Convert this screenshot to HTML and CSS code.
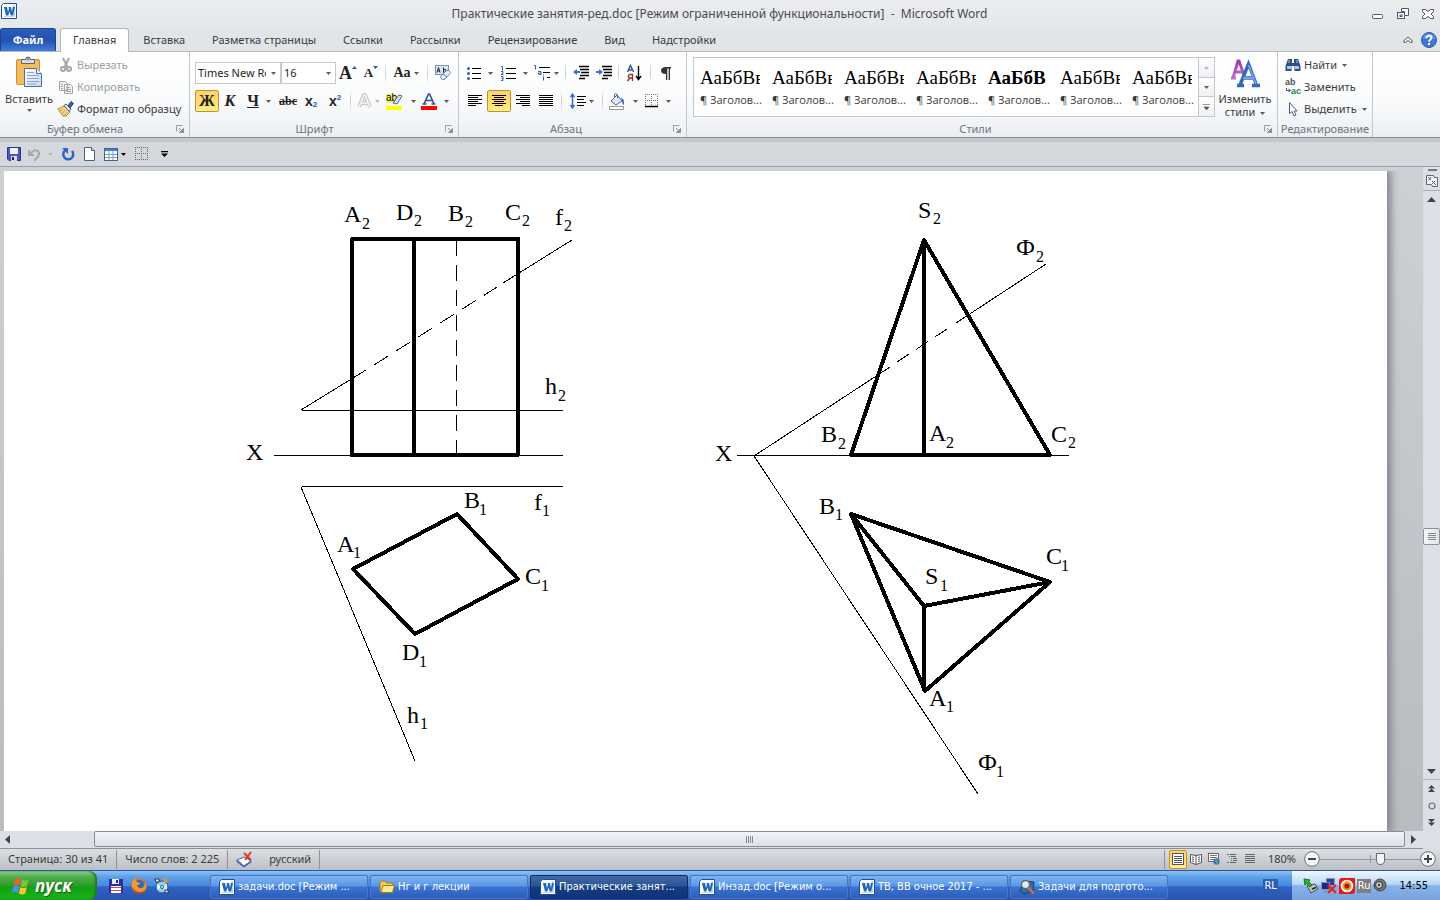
FILE: index.html
```html
<!DOCTYPE html>
<html lang="ru">
<head>
<meta charset="utf-8">
<title>Практические занятия-ред.doc - Microsoft Word</title>
<link rel="stylesheet" href="styles.css">
</head>
<body>
<svg class="defs" aria-hidden="true">
  <defs>
    <linearGradient id="gw" x1="0" y1="0" x2="1" y2="1"><stop offset="0" stop-color="#fff"/><stop offset="1" stop-color="#c3d8f2"/></linearGradient>
    <linearGradient id="gp" x1="0" y1="0" x2="0" y2="1"><stop offset="0" stop-color="#9a3fb0"/><stop offset="1" stop-color="#c26ad2"/></linearGradient>
    <symbol id="word" viewBox="0 0 16 16"><path d="M2.500.5h13v15H.5v-13z" fill="#fff" stroke="#1f4e96"/><path d="M12 2h2v12H3v-1h9z" fill="#c3d8f2"/><path d="M3 4h3l1 5 1-3.500L7.500 4H10l1 5 .8-5H14l-2 8.500H9.800L8.500 8.500l-1.200 4H5z" fill="#1c66bd"/></symbol>
    <symbol id="dn" viewBox="0 0 5 3"><path d="M0 0h5L2.500 3z" fill="currentColor"/></symbol>
    <symbol id="launch" viewBox="0 0 8 8"><path d="M.5 6.500v-6h6" fill="none" stroke="#9a9fa8"/><path d="M3 3l3 3M7.500 3.500v4h-4z" fill="#8b9099" stroke="#8b9099"/></symbol>
    <symbol id="lines" viewBox="0 0 14 12"><path d="M0 .5h14M0 2.500h10M0 4.500h14M0 6.500h10M0 8.500h14M0 10.500h8" stroke="#000"/></symbol>
  </defs>
</svg>

<header class="titlebar">
  <svg class="i16"><use href="#word"/></svg>
  <h1>Практические занятия-ред.doc [Режим ограниченной функциональности]&nbsp; -&nbsp; Microsoft Word</h1>
  <div class="wincontrols">
    <button aria-label="Свернуть"><svg width="12" height="12"><rect x=".5" y="6.500" width="10" height="4" rx="1" fill="#fff" stroke="#53536a"/></svg></button>
    <button aria-label="Восстановить"><svg width="12" height="12" fill="#fff" stroke="#53536a"><path d="M4.500.5h7v7h-4v-4h-3z"/><rect x=".5" y="4.500" width="7" height="6"/><rect x="3" y="7" width="2" height="1.500"/></svg></button>
    <button aria-label="Закрыть"><svg width="12" height="12"><path d="M.5 1.500h3L6 3.500l2.500-2h3v2L9 6l2.500 2.500v2h-3L6 8.500l-2.500 2h-3v-2L3 6 .5 3.500z" fill="#fff" stroke="#53536a"/></svg></button>
  </div>
</header>

<nav class="tabs">
  <button class="file">Файл</button>
  <button class="tab on">Главная</button>
  <button class="tab">Вставка</button>
  <button class="tab">Разметка страницы</button>
  <button class="tab">Ссылки</button>
  <button class="tab">Рассылки</button>
  <button class="tab">Рецензирование</button>
  <button class="tab">Вид</button>
  <button class="tab">Надстройки</button>
  <div class="tabs-end">
    <button aria-label="Свернуть ленту"><svg width="10" height="8"><path d="M1 6.500V4.500L5 1l4 3.500v2H7.500L5 4.500 2.500 6.500z" fill="#fff" stroke="#555"/></svg></button>
    <button aria-label="Справка"><svg width="16" height="16"><circle cx="8" cy="8" r="7.500" fill="#3f78cf" stroke="#2c5aa8"/><path d="M2 7a6 5.500 0 0 1 12 0q-6-2-12 0" fill="#7fb0ee" opacity=".6"/><path d="M5.500 6.200c0-3.400 5-3.400 5-.5 0 1.900-2.500 1.900-2.500 4" fill="none" stroke="#fff" stroke-width="1.800"/><path d="M7 11h2v2H7z" fill="#fff"/></svg></button>
  </div>
</nav>

<section class="ribbon">
  <div class="group clip">
    <div class="body">
      <button class="big paste">
        <svg width="28" height="32"><rect x="1.500" y="3.500" width="23" height="25" rx="1.500" fill="#f2bd5c" stroke="#c98f35"/><path d="M6.500 7.500v-4h4a2.500 2.500 0 0 1 5 0h4v4z" fill="#d9dde3" stroke="#5d6672"/><circle cx="13" cy="3" r="1" fill="#fff" stroke="#5d6672"/><path d="M9.500 12.500h12l5 5v13h-17z" fill="url(#gw)" stroke="#4f6f9b"/><path d="M21.500 12.500v5h5" fill="#fff" stroke="#4f6f9b"/><path d="M12 16.500h7M12 19.500h12M12 22.500h12M12 25.500h12M12 28h9" stroke="#8ba6cc"/></svg>
        <span>Вставить</span><svg class="arr"><use href="#dn"/></svg>
      </button>
      <div class="stack">
        <button class="off"><svg class="i16" fill="none" stroke="#a3a5a8" stroke-width="2"><path d="M5 1l4.500 9M11 1L6.500 10"/><circle cx="5" cy="12" r="2"/><circle cx="11" cy="12" r="2"/></svg>Вырезать</button>
        <button class="off"><svg class="i16" fill="#f1f1f1" stroke="#a3a5a8"><path d="M1.500 2.500h6l2 2v7h-8zM6.500 5.500h6l2 2v7h-8z"/><path d="M8 8.500h4M8 10.500h5M8 12.500h5M3 5.500h2M3 7.500h2M3 9.500h2"/></svg>Копировать</button>
        <button><svg class="i16"><path d="M0 8l6-3 6 6-4 4H5z" fill="#f6dc84" stroke="#b18a3a"/><path d="M4 13l3-4M6 15l3-4M2 10l3-2" stroke="#c59c45"/><path d="M6 4.500L8 3l5 5-2 2.500z" fill="#e7e9ee" stroke="#5b6472"/><path d="M10 5l3-4.500 2.500 2L12 7z" fill="#3f62b4" stroke="#223f85"/></svg>Формат по образцу</button>
      </div>
    </div>
    <footer><span>Буфер обмена</span><svg class="i8"><use href="#launch"/></svg></footer>
  </div>

  <div class="group font">
    <div class="rows">
      <div class="row">
        <div class="combo c-name"><input aria-label="Шрифт" value="Times New Roman"><button aria-label="Список шрифтов"><svg class="arr"><use href="#dn"/></svg></button></div>
        <div class="combo c-size"><input aria-label="Размер шрифта" value="16"><button aria-label="Список размеров"><svg class="arr"><use href="#dn"/></svg></button></div>
        <button class="w24 serif s18" aria-label="Увеличить размер">A<svg class="sup" width="5" height="3"><path d="M0 3h5L2.500 0z" fill="#2d57a7"/></svg></button>
        <button class="w22 serif s13" aria-label="Уменьшить размер">A<svg class="sup" width="5" height="3"><path d="M0 0h5L2.500 3z" fill="#2d57a7"/></svg></button>
        <i class="sep"></i>
        <button class="w36 serif s14">Aa<svg class="arr"><use href="#dn"/></svg></button>
        <i class="sep"></i>
        <button class="w26" aria-label="Очистить формат"><svg width="17" height="16"><rect x=".5" y=".5" width="13" height="9" fill="#dbe8f7" stroke="#7f93b3"/><path d="M2 7.500l1.500-5L5 7.500M2.500 6h2M8.500 2.500v5M8.500 4.500q3-.5 2.500 1.500-.5 2-2.500 1" fill="none" stroke="#222"/><path d="M6 11l5-5q1-1 2.500-.5l1.500 1q1 1 0 2l-5 5.500q-1 1-2.500.5L6 13.500q-1-1 0-2.500z" fill="#e9effa" stroke="#5f7fb6"/><path d="M8 9l4 3" stroke="#5f7fb6"/></svg></button>
      </div>
      <div class="row">
        <button class="hot w24 serif s16">Ж</button>
        <button class="w22 serif s16 it">К</button>
        <button class="w36 serif s16"><u>Ч</u><svg class="arr gapped"><use href="#dn"/></svg></button>
        <button class="w22 serif s12"><s>abc</s></button>
        <button class="w24 sans s14">x<small class="lo">2</small></button>
        <button class="w24 sans s14">x<small class="hi">2</small></button>
        <i class="sep"></i>
        <button class="w30" aria-label="Текстовые эффекты"><svg width="15" height="16"><path d="M2 14L7 2h1l5 12M4.500 10h6" fill="none" stroke="#c9c9cc" stroke-width="4"/><path d="M2 14L7 2h1l5 12M4.500 10h6" fill="none" stroke="#f6f6f6" stroke-width="1.500"/></svg><svg class="arr pale"><use href="#dn"/></svg></button>
        <button class="w36" aria-label="Цвет выделения"><svg width="18" height="17"><path d="M0 1h9v9H0z" fill="#f7f36a"/><text x="0" y="8" class="tiny">ab</text><path d="M7 10l6-8 3 1-5 8z" fill="#dbe6f5" stroke="#4767a0"/><path d="M0 13h16v4H0z" fill="#ff0"/></svg><svg class="arr gapped"><use href="#dn"/></svg></button>
        <button class="w32" aria-label="Цвет текста"><svg width="16" height="17"><path d="M3 11L7.500 1h1L13 11M5 7.500h6M1.500 11h4M10.500 11h4" fill="none" stroke="#30549b" stroke-width="1.700"/><path d="M0 13h16v4H0z" fill="#f00"/></svg><svg class="arr gapped"><use href="#dn"/></svg></button>
      </div>
    </div>
    <footer><span>Шрифт</span><svg class="i8"><use href="#launch"/></svg></footer>
  </div>

  <div class="group para">
    <div class="rows">
      <div class="row">
        <button class="w34" aria-label="Маркеры"><svg width="14" height="14"><path d="M5 2.500h9M5 7.500h9M5 12.500h9" stroke="#000"/><circle cx="1.500" cy="2.500" r="1.500" fill="#3a5fa8"/><circle cx="1.500" cy="7.500" r="1.500" fill="#3a5fa8"/><circle cx="1.500" cy="12.500" r="1.500" fill="#3a5fa8"/></svg><svg class="arr gapped"><use href="#dn"/></svg></button>
        <button class="w34" aria-label="Нумерация"><svg width="15" height="15"><path d="M5 2.500h10M5 7.500h10M5 12.500h10" stroke="#000"/><path d="M0 .5h1.500v4M0 5.500h2v1.500l-2 1.500h2.500M0 10.500h2v4H0M.5 12.500H2" fill="none" stroke="#3a5fa8"/></svg><svg class="arr gapped"><use href="#dn"/></svg></button>
        <button class="w30" aria-label="Многоуровневый список"><svg width="17" height="16"><path d="M5 2.500h11M9 7.500h7M13 12.500h3" stroke="#000"/><path d="M0 .5h1.500v4M4 6.500h3v3H4.500V8H7M9.500 11.500v4M9.500 9.500v1" fill="none" stroke="#3a5fa8"/></svg><svg class="arr"><use href="#dn"/></svg></button>
        <i class="sep wide"></i>
        <button class="w24" aria-label="Уменьшить отступ"><svg width="16" height="14"><path d="M6 .5h10M7 3.500h9M8 6.500h8M7 9.500h9M6 12.500h6" stroke="#000" stroke-width="1.500"/><path d="M0 6l4-3v2h3v2H4v2z" fill="#3b70c9"/></svg></button>
        <button class="w22" aria-label="Увеличить отступ"><svg width="16" height="14"><path d="M6 .5h10M7 3.500h9M8 6.500h8M7 9.500h9M6 12.500h6" stroke="#000" stroke-width="1.500"/><path d="M7 6L3 3v2H0v2h3v2z" fill="#3b70c9"/></svg></button>
        <i class="sep"></i>
        <button class="w26" aria-label="Сортировка"><svg width="15" height="16"><path d="M.5 7L3.500.5l3 6.500M1.500 5h4" fill="none" stroke="#30549b" stroke-width="1.400"/><path d="M5.500 16V9.500h-3q-2.500 2 0 3.500h3M3 13l-2.500 3" fill="none" stroke="#97302c" stroke-width="1.400"/><path d="M11.500 1v12M9 11l2.500 3.500L14 11" fill="none" stroke="#000" stroke-width="1.400"/></svg></button>
        <i class="sep"></i>
        <button class="w26" aria-label="Непечатаемые знаки"><svg width="10" height="13"><path d="M5 0h5v1.500H9V13H7.700V1.500H6.300V13H5V7Q0 7 0 3.500T5 0z" fill="#333"/></svg></button>
      </div>
      <div class="row">
        <button class="w24" aria-label="По левому краю"><svg width="14" height="12"><use href="#lines"/></svg></button>
        <button class="hot w24" aria-label="По центру"><svg width="14" height="12"><path d="M0 .5h14M2 2.500h10M0 4.500h14M2 6.500h10M0 8.500h14M3 10.500h8" stroke="#000"/></svg></button>
        <button class="w24" aria-label="По правому краю"><svg width="14" height="12"><path d="M0 .5h14M4 2.500h10M0 4.500h14M4 6.500h10M0 8.500h14M6 10.500h8" stroke="#000"/></svg></button>
        <button class="w22" aria-label="По ширине"><svg width="14" height="12"><path d="M0 .5h14M0 2.500h14M0 4.500h14M0 6.500h14M0 8.500h14M0 10.500h14" stroke="#000"/></svg></button>
        <i class="sep wide"></i>
        <button class="w34" aria-label="Интервал"><svg width="16" height="16"><path d="M7 3.500h9M7 6.500h7M7 9.500h9M7 12.500h7" stroke="#000"/><path d="M2.500 1v14M.5 4l2-3 2 3M.5 12l2 3 2-3" fill="none" stroke="#3b70c9" stroke-width="1.500"/></svg><svg class="arr"><use href="#dn"/></svg></button>
        <i class="sep"></i>
        <button class="w36" aria-label="Заливка"><svg width="17" height="17"><path d="M2 8l6-6 5 6-6 4z" fill="#dfe9f7" stroke="#4767a0"/><path d="M5.500 5V1.500q1.500-2 3 0V5" fill="none" stroke="#4767a0"/><path d="M12 5q4 1 3 7-2-1-2-4z" fill="#3b70c9"/><rect x=".5" y="13.500" width="14" height="3" fill="#fff" stroke="#999"/></svg><svg class="arr gapped"><use href="#dn"/></svg></button>
        <button class="w34" aria-label="Границы"><svg width="14" height="14"><path d="M0 .5h13M0 6.500h13M.5 0v12M6.500 0v12M12.500 0v12" stroke="#777" stroke-dasharray="1 1"/><path d="M0 12.500h13" stroke="#000" stroke-width="1.500"/></svg><svg class="arr gapped"><use href="#dn"/></svg></button>
      </div>
    </div>
    <footer><span>Абзац</span><svg class="i8"><use href="#launch"/></svg></footer>
  </div>

  <div class="group styles">
    <div class="body">
      <div class="gallery">
        <button class="style"><b>АаБбВв</b><span>¶ Заголов...</span></button>
        <button class="style"><b>АаБбВв</b><span>¶ Заголов...</span></button>
        <button class="style"><b>АаБбВв</b><span>¶ Заголов...</span></button>
        <button class="style"><b>АаБбВв</b><span>¶ Заголов...</span></button>
        <button class="style strong"><b>АаБбВ</b><span>¶ Заголов...</span></button>
        <button class="style"><b>АаБбВв</b><span>¶ Заголов...</span></button>
        <button class="style"><b>АаБбВв</b><span>¶ Заголов...</span></button>
        <div class="spin">
          <button aria-label="Вверх"><svg width="5" height="3"><path d="M0 3h5L2.500 0z" fill="#b5b8bd"/></svg></button>
          <button aria-label="Вниз"><svg class="arr"><use href="#dn"/></svg></button>
          <button aria-label="Все стили"><svg width="7" height="6"><path d="M0 .5h7M1 3h5L3.500 6z" fill="#555" stroke="#555" stroke-width=".6"/></svg></button>
        </div>
      </div>
      <button class="big change">
        <svg width="30" height="30"><path d="M1 20h5M3 20L8 3h1l5 14M5 14h8" fill="none" stroke="url(#gp)" stroke-width="3"/><path d="M10 27L18.500 6l8 21M13 20h11M7 27.500h7M22 27.500h8" fill="none" stroke="#3567b8" stroke-width="3.400"/><path d="M18.500 7l7.500 19M13 20h10" stroke="#6fa4ee" stroke-width="1.800" fill="none"/></svg>
        <span>Изменить</span><span>стили <svg class="arr"><use href="#dn"/></svg></span>
      </button>
    </div>
    <footer><span>Стили</span><svg class="i8"><use href="#launch"/></svg></footer>
  </div>

  <div class="group edit">
    <div class="stack">
      <button><svg class="i16"><path d="M3 2h4v4h2V2h4l2.500 7v5h-6V9h-3v5h-6V9z" fill="#2c4f86"/><path d="M2 9h4v3H2zM10 9h4v3h-4z" fill="#a9c6ec"/><path d="M4 3v3M12 3v3" stroke="#a9c6ec"/></svg>Найти <svg class="arr"><use href="#dn"/></svg></button>
      <button><svg class="i16"><text x="0" y="6" class="rep">ab</text><text x="6" y="15" class="rep green">ac</text><path d="M1.500 9v2.500H5M3.500 10l2 1.500-2 1.500" fill="none" stroke="#30549b"/></svg>Заменить</button>
      <button><svg class="i16"><path d="M4.500 1.500v11l2.500-2 2 4.500 2-1-2-4h3z" fill="#fff" stroke="#4a618c"/></svg>Выделить <svg class="arr"><use href="#dn"/></svg></button>
    </div>
    <footer><span>Редактирование</span></footer>
  </div>
</section>

<div class="qat">
  <button class="q27" aria-label="Сохранить"><svg width="14" height="14"><path d="M.5.5h13v13H2l-1.500-1.500z" fill="#4a55c8" stroke="#2f3590"/><path d="M3 1h8v6H3z" fill="#eef1ff"/><path d="M4 9h6v5H4z" fill="#d9d9e4"/><path d="M5 10h2v3H5z" fill="#223"/></svg></button>
  <button class="q27 pale" aria-label="Отменить"><svg width="13" height="13"><path d="M1 2v5h5M1.500 6.500Q8-1 11 4.500q.5 4-5 8" fill="none" stroke="#a5a8ad" stroke-width="2"/></svg><svg class="arr gapped"><use href="#dn"/></svg></button>
  <button class="q27" aria-label="Повторить"><svg width="14" height="14"><path d="M4 3.500A5 5 0 1 0 11 4" fill="none" stroke="#3166c0" stroke-width="2.500"/><path d="M1 1h6v6z" fill="#3166c0"/></svg></button>
  <button class="q18" aria-label="Создать"><svg width="12" height="14"><path d="M.5.500h7l3 3v10H.5z" fill="#fff" stroke="#4f6080"/><path d="M7.500.5v3h3" fill="#c9d5e8" stroke="#4f6080"/></svg></button>
  <button class="q32" aria-label="Таблица"><svg width="14" height="13"><rect x=".5" y=".5" width="13" height="12" fill="#fff" stroke="#3e5f9c"/><path d="M1 1h12v2H1z" fill="#4f7fd0"/><path d="M1 6.500h12M1 9.500h12M5 3v9M9 3v9" stroke="#7f9cc8"/></svg><svg class="arr black"><use href="#dn"/></svg></button>
  <button class="w22" aria-label="Сетка"><svg width="14" height="14"><path d="M0 .5h13M0 6.500h13M0 12.500h13M.5 0v13M6.500 0v13M12.500 0v13" stroke="#666" stroke-dasharray="1 1"/></svg></button>
  <button class="w22" aria-label="Настройка панели"><svg width="7" height="6"><path d="M0 0h7v1.300H0zM0 2.500h7L3.500 6z" fill="#000"/></svg></button>
</div>

<main class="work">
  <div class="desk">
    <article class="page">
      <svg class="drawing" width="1383" height="660" viewBox="4 171 1383 660">
        <g class="thin">
          <path d="M302 410.500h261M274 455.500h289M302 486.500h261M301 487L415 761"/>
          <path d="M301 410L366 370M503 283L572 240"/>
          <path d="M374 365L497 287" stroke-dasharray="17 9"/>
          <path d="M456.500 240V455" stroke-dasharray="16 9"/>
          <path d="M737 455.500h332M978 794L754 456L890 367M956 323L1046 264"/>
          <path d="M897 362L950 327" stroke-dasharray="14 9"/>
        </g>
        <g class="thick">
          <path d="M352 239H518V455H352ZM414 239V455M353 569L457 514L518 579L415 634Z"/>
          <path d="M924 240L851 455H1050ZM924 240V455"/>
          <path d="M851 514L1050 582L925 691ZM851 514L924 606L1050 582M924 606V691"/>
        </g>
        <g class="label">
          <text x="344" y="222">A<tspan class="n" x="362" y="229">2</tspan></text>
          <text x="396" y="220">D<tspan class="n" x="414" y="226">2</tspan></text>
          <text x="448" y="221">B<tspan class="n" x="465" y="227">2</tspan></text>
          <text x="505" y="220">C<tspan class="n" x="522" y="226">2</tspan></text>
          <text x="555" y="225">f<tspan class="n" x="564" y="231">2</tspan></text>
          <text x="545" y="394">h<tspan class="n" x="558" y="401">2</tspan></text>
          <text x="246" y="460">X</text>
          <text x="464" y="508">B<tspan class="n" x="479" y="515">1</tspan></text>
          <text x="534" y="510">f<tspan class="n" x="542" y="516">1</tspan></text>
          <text x="337" y="552">A<tspan class="n" x="353" y="558">1</tspan></text>
          <text x="525" y="584">C<tspan class="n" x="541" y="591">1</tspan></text>
          <text x="402" y="660">D<tspan class="n" x="419" y="667">1</tspan></text>
          <text x="407" y="723">h<tspan class="n" x="420" y="729">1</tspan></text>
          <text x="918" y="218">S<tspan class="n" x="933" y="224">2</tspan></text>
          <text x="1016" y="255">Ф<tspan class="n" x="1036" y="262">2</tspan></text>
          <text x="821" y="442">B<tspan class="n" x="838" y="449">2</tspan></text>
          <text x="929" y="441">A<tspan class="n" x="946" y="448">2</tspan></text>
          <text x="1051" y="442">C<tspan class="n" x="1068" y="448">2</tspan></text>
          <text x="715" y="461">X</text>
          <text x="819" y="514">B<tspan class="n" x="835" y="520">1</tspan></text>
          <text x="925" y="584">S<tspan class="n" x="940" y="591">1</tspan></text>
          <text x="1046" y="564">C<tspan class="n" x="1061" y="571">1</tspan></text>
          <text x="929" y="706">A<tspan class="n" x="946" y="712">1</tspan></text>
          <text x="978" y="770">Ф<tspan class="n" x="996" y="777">1</tspan></text>
        </g>
      </svg>
    </article>
  </div>
  <div class="vscroll">
    <button class="split" aria-label="Линейка"><svg width="12" height="19"><path d="M2 .5h9M2 1.500h9" stroke="#777"/><path d="M.5 6.500h7l1 2h3v9h-5l-1-2h-5z" fill="#f1f3f6" stroke="#666"/><path d="M2 8l3 3M5 8l-2 3M6 12l4 4M9 12l-3 3" stroke="#666"/></svg></button>
    <button class="up" aria-label="Вверх"><svg width="9" height="5"><path d="M0 5h9L4.500 0z" fill="#444"/></svg></button>
    <div class="vtrack"><button class="vthumb" aria-label="Прокрутка"><svg width="8" height="8"><path d="M0 .5h8M0 2.500h8M0 4.500h8M0 6.500h8" stroke="#888"/></svg></button></div>
    <button class="down" aria-label="Вниз"><svg width="9" height="5"><path d="M0 0h9L4.500 5z" fill="#444"/></svg></button>
    <button class="nav" aria-label="Предыдущая страница"><svg width="7" height="7"><path d="M0 3.500h7L3.500 0zM0 7h7L3.500 3.500z" fill="#444"/></svg></button>
    <button class="nav" aria-label="Объект перехода"><svg width="8" height="8"><circle cx="4" cy="4" r="3" fill="none" stroke="#666" stroke-width="1.200"/></svg></button>
    <button class="nav" aria-label="Следующая страница"><svg width="7" height="7"><path d="M0 0h7L3.500 3.500zM0 3.500h7L3.500 7z" fill="#444"/></svg></button>
  </div>
  <div class="hscroll">
    <button class="hleft" aria-label="Влево"><svg width="5" height="9"><path d="M5 0v9L0 4.500z" fill="#444"/></svg></button>
    <button class="hthumb" aria-label="Горизонтальная прокрутка"><svg width="8" height="7"><path d="M.5 0v7M2.500 0v7M4.500 0v7M6.500 0v7" stroke="#888"/></svg></button>
    <button class="hright" aria-label="Вправо"><svg width="5" height="9"><path d="M0 0v9l5-4.500z" fill="#444"/></svg></button>
  </div>
</main>

<div class="status">
  <span class="cell">Страница: 30 из 41</span>
  <span class="cell">Число слов: 2 225</span>
  <span class="cell lang"><svg width="17" height="15"><path d="M1 8l7-3 7 4-7 5z" fill="#fff" stroke="#4465a5"/><path d="M1 8v2l7 5 7-5V9l-7 5z" fill="#8aa8dc" stroke="#4465a5"/><path d="M8 1l7 7M15 0L9 8" stroke="#e03c20" stroke-width="2"/></svg>русский</span>
  <div class="views">
    <button class="hot" aria-label="Разметка страницы"><svg width="12" height="12"><rect x=".5" y=".5" width="11" height="11" fill="#fff" stroke="#555"/><path d="M2 3.500h8M2 5.500h8M2 7.500h8M2 9.500h8" stroke="#555"/></svg></button>
    <button aria-label="Режим чтения"><svg width="12" height="12"><path d="M.5 1.500l5.500 1 5.500-1v8l-5.500 2-5.500-2zM6 2v9" fill="#fff" stroke="#555"/><path d="M2 4l2 .5M2 6l2 .5M2 8l2 .5M8 4.500l2-.5M8 6.500l2-.5M8 8.500l2-.5" stroke="#555"/></svg></button>
    <button aria-label="Веб-документ"><svg width="12" height="12"><rect x=".5" y=".5" width="10" height="8" fill="#fff" stroke="#666"/><path d="M2 2.500h7M2 4.500h7M2 6.500h4" stroke="#777"/><circle cx="8.500" cy="8.500" r="3.200" fill="#3c78b8"/><path d="M7 7l2 .5 1 2-1.500 1z" fill="#6bb36b"/></svg></button>
    <button aria-label="Структура"><svg width="10" height="10"><path d="M0 .5h2M3 .5h6M2 2.500h1M4 2.500h5M4 4.500h1M6 4.500h4M4 6.500h1M6 6.500h4M0 8.500h2M3 8.500h6" stroke="#666"/></svg></button>
    <button aria-label="Черновик"><svg width="10" height="10"><path d="M0 .5h10M0 2.500h10M0 4.500h10M0 6.500h10M0 8.500h10" stroke="#666"/></svg></button>
  </div>
  <button class="pct">180%</button>
  <button class="round" aria-label="Уменьшить"><svg width="16" height="16"><circle cx="8" cy="8" r="7.300" fill="#f6f7f8" stroke="#6b7078"/><path d="M4 8h8" stroke="#444" stroke-width="2"/></svg></button>
  <input class="zoom" type="range" min="0" max="100" value="61" aria-label="Масштаб">
  <button class="round" aria-label="Увеличить"><svg width="16" height="16"><circle cx="8" cy="8" r="7.300" fill="#f6f7f8" stroke="#6b7078"/><path d="M4 8h8M8 4v8" stroke="#444" stroke-width="2"/></svg></button>
</div>

<footer class="taskbar">
  <button class="start"><svg width="20" height="18"><path d="M4 2q3-2 6 0L8.500 8.500q-3-2-6 0z" fill="#f0602a"/><path d="M11 2.500q3 2 6.500 0L16 9q-3 2-6.500 0z" fill="#7fc241"/><path d="M2.300 9.500q3-2 6 0L7 16q-3-2-6 0z" fill="#4a8df0"/><path d="M9.300 10q3 2 6.500 0l-1.500 6.500q-3 2-6.500 0z" fill="#fbc62a"/></svg>пуск</button>
  <div class="quick">
    <button aria-label="Save"><svg class="i16"><path d="M1 1h14v14H1z" fill="#2b2f9c"/><path d="M4 1h7v5H4z" fill="#e8ecf8"/><path d="M8 2h2v3H8z" fill="#2b2f9c"/><path d="M3 8h10v7H3z" fill="#fff"/><path d="M3 9.500h10M3 12.500h10" stroke="#e04048"/></svg></button>
    <button aria-label="Firefox"><svg class="i16"><circle cx="8" cy="8" r="7.500" fill="#e5701a"/><circle cx="8.500" cy="6.500" r="4.500" fill="#3469b8"/><path d="M1 5q1-4 4-4.500Q4 3 6 4l3 1q0 2-3 2 1 4 5 3 3-1 3.500-5 2 5-1 8.500Q8 17 3 13 0 9 1 5z" fill="#f59a2a"/><path d="M2 9q2 5 7 5 4 0 6-4-1 5-7 5.500Q2 15 2 9z" fill="#c4450f"/></svg></button>
    <button aria-label="Nero"><svg class="i16"><circle cx="8" cy="9" r="6" fill="#8fd0f4" stroke="#1e5bab"/><path d="M8 9l5-3v6zM8 9L3 6v6z" fill="#e6f8ff"/><circle cx="8" cy="9" r="1.500" fill="#fff" stroke="#357"/><path d="M8 1l6-1-2 2 3 1-4 2z" fill="#f3952b"/><path d="M1 1h4v3H2zM11 12h3v3h-3z" fill="#fff" stroke="#234"/></svg></button>
  </div>
  <div class="tasks">
    <button><svg class="i16"><use href="#word"/></svg>задачи.doc [Режим ...</button>
    <button><svg class="i16"><path d="M1 3.500L2.500 2H6l1.500 2H14v9.500H2L1 12z" fill="#f3cf4e" stroke="#a67a12"/><path d="M2 13.500L4 6.500h11.500l-2 7z" fill="#fdeb96" stroke="#a67a12"/></svg>Нг и г лекции</button>
    <button class="on"><svg class="i16"><use href="#word"/></svg>Практические занят...</button>
    <button><svg class="i16"><use href="#word"/></svg>Инзад.doc [Режим о...</button>
    <button><svg class="i16"><use href="#word"/></svg>ТВ, ВВ очное 2017 - ...</button>
    <button><svg class="i16"><path d="M5 2l10 1-1 9-9 3-4-3z" fill="#2f6fb0" stroke="#1c3f66"/><circle cx="6.500" cy="5.500" r="4" fill="#dceffc" stroke="#666" stroke-width="1.300"/><path d="M9.500 8.500l5 6" stroke="#e06a3a" stroke-width="2.500"/></svg>Задачи для подгото...</button>
  </div>
  <span class="rl">RL</span>
  <div class="tray">
    <svg class="i16"><path d="M4 8l8-2 3 5-7 4z" fill="#b9bec6" stroke="#4a5058"/><path d="M9 11l4-1.500" stroke="#222" stroke-width="1.500"/><path d="M1 1l6 1-1.500 1.500L9 7 7 9 3.500 5.500 2 7z" fill="#2fb52c" stroke="#157015"/></svg>
    <svg class="i16"><rect x="5.500" y=".5" width="8" height="7" fill="#2d3f9e" stroke="#8b94b8"/><rect x=".5" y="4.500" width="8" height="7" fill="#1c2a80" stroke="#8b94b8"/><path d="M2 13.500h6" stroke="#8b94b8" stroke-width="2"/><path d="M7 7l8 8M15 7l-8 8" stroke="#e02820" stroke-width="2.400"/></svg>
    <svg class="i16"><path d="M3 0h13v13q0 3-3 3H0V3q0-3 3-3z" fill="#e01b1b"/><circle cx="8" cy="8" r="5.500" fill="#f39a1f" stroke="#fff" stroke-width="1.700"/><circle cx="8" cy="8" r="2.600" fill="#a8200c"/></svg>
    <span class="ru">Ru</span>
    <svg class="i16"><circle cx="7" cy="7" r="6" fill="#777" stroke="#444"/><circle cx="6" cy="7" r="3.500" fill="#c9c9c9" stroke="#333"/><circle cx="6" cy="7" r="1.200" fill="#444"/><path d="M10 14q3-1 3.500-4.500M12 15.500q3-1.500 3.500-5" fill="none" stroke="#8e9be0"/></svg>
    <time>14:55</time>
  </div>
</footer>
</body>
</html>
```

FILE: styles.css
```css
* { box-sizing: border-box; }
html, body { height: 100%; }
body {
  margin: 0;
  display: flex;
  flex-direction: column;
  overflow: hidden;
  background: #d4d8dd;
  color: #3b3b3b;
  font: 11px/16px "Noto Sans", "Open Sans", sans-serif;
}
button {
  margin: 0;
  padding: 0;
  border: 0;
  background: none;
  color: inherit;
  font: inherit;
  display: flex;
  align-items: center;
  justify-content: center;
  white-space: nowrap;
}
svg { flex: none; display: block; overflow: visible; }
.defs { position: absolute; width: 0; height: 0; }
.i16 { width: 16px; height: 16px; }
.i8 { width: 8px; height: 8px; }
.arr { width: 5px; height: 3px; color: #5c5c5c; margin-left: 3px; }
.arr.gapped { margin-left: 7px; }
.arr.pale, .pale .arr { color: #b5b8bd; }
.arr.black { color: #000; }

.titlebar {
  display: flex;
  align-items: center;
  height: 28px;
  padding: 0 6px 0 1px;
  background: linear-gradient(#ebedef, #e4e7ea);
}
.titlebar > .i16 { margin-bottom: 6px; }
.titlebar h1 {
  flex: 1;
  margin: 0 0 0 50px;
  font-size: 12px;
  font-weight: 400;
  text-align: center;
  color: #4a4a50;
}
.wincontrols { display: flex; gap: 13px; }

.tabs {
  display: flex;
  height: 24px;
  padding-right: 3px;
  background: #e2e5e8;
  border-bottom: 1px solid #b4b8bd;
}
.tabs .file {
  width: 56px;
  margin-right: 4px;
  border: 1px solid #17429c;
  border-bottom: 0;
  border-radius: 3px 3px 0 0;
  background: linear-gradient(#2a5fba, #2350ad 50%, #3f80dc);
  color: #fff;
  font-weight: 700;
}
.tab { padding: 0 13px 0 14px; }
.tab.on {
  height: 24px;
  margin-bottom: -1px;
  padding: 0 12px 1px;
  border: 1px solid #b4b8bd;
  border-bottom: 0;
  border-radius: 3px 3px 0 0;
  background: #fff;
}
.tabs-end { display: flex; align-items: center; gap: 8px; margin-left: auto; }

.ribbon {
  display: flex;
  height: 86px;
  background: linear-gradient(#fff, #fbfcfd 50%, #eceff2);
  border-bottom: 1px solid #868b91;
}
.group {
  display: flex;
  flex-direction: column;
  justify-content: space-between;
  border-right: 1px solid #c3c7cc;
}
.group footer {
  display: flex;
  align-items: center;
  height: 17px;
  padding-right: 5px;
  color: #6d7480;
}
.group footer span { flex: 1; text-align: center; }
.group.clip footer span, .group.font footer span { padding-right: 6px; }
.clip { width: 190px; }
.font { width: 269px; }
.para { width: 228px; }
.styles { width: 591px; }
.edit { width: 95px; }
.group.edit footer { padding: 0; }
.body { display: flex; }
.big { flex-direction: column; justify-content: flex-start; line-height: 13px; }
.big .arr { margin: 4px 0 0; }
.big span .arr { display: inline-block; vertical-align: middle; margin: 0 0 0 2px; }
.paste { width: 58px; padding-top: 4px; }
.paste > svg:first-child { margin-bottom: 4px; }
.change { width: 60px; padding-top: 6px; }
.change > svg:first-child { margin-bottom: 4px; }
.stack { display: flex; flex-direction: column; padding-top: 2px; }
.stack button { height: 22px; gap: 3px; justify-content: flex-start; }
.edit .stack { padding-left: 7px; }
.edit .arr { margin-left: 2px; }
.off { color: #9b9ea3; }
.tiny { font: 10px "Liberation Sans", sans-serif; }
.rep { font: bold 9px/9px "Liberation Sans", sans-serif; fill: #555; }
.rep.green { fill: #26863a; }

.rows { display: flex; flex-direction: column; gap: 6px; padding: 10px 0 0 5px; }
.row { display: flex; height: 22px; }
.sep { width: 6px; flex: none; background: linear-gradient(transparent, #c3c7cc, transparent) center / 1px 100% no-repeat; }
.sep.wide { width: 8px; }
.w22 { width: 22px; }
.w24 { width: 24px; }
.w26 { width: 26px; }
.w30 { width: 30px; }
.w32 { width: 32px; }
.w34 { width: 34px; }
.w36 { width: 36px; }
.para .rows { padding-left: 4px; }
.serif { font-family: "Liberation Serif", serif; font-weight: 700; color: #222; }
.sans { font-family: "Liberation Sans", sans-serif; font-weight: 700; color: #222; }
.s12 { font-size: 12px; }
.s13 { font-size: 13px; }
.s14 { font-size: 14px; }
.s16 { font-size: 16px; }
.s18 { font-size: 18px; }
.it { font-style: italic; }
.sup { align-self: flex-start; margin-top: 4px; }
small { font-size: 8px; line-height: 8px; color: #2d57a7; }
.lo { align-self: flex-end; margin-bottom: 3px; }
.hi { align-self: flex-start; margin-top: 4px; }
.hot {
  border: 1px solid #c2922e;
  border-radius: 2px;
  background: linear-gradient(#fbd36a, #ffe06f 60%, #fff08c);
}
.combo { display: flex; border: 1px solid #c6cacf; background: #fff; }
.combo input {
  flex: 1;
  min-width: 0;
  border: 0;
  padding: 0 0 0 2px;
  outline: 0;
  background: none;
  color: #1e1e1e;
  font: inherit;
}
.combo button { width: 14px; }
.combo .arr { margin: 0; }
.c-name { width: 86px; }
.c-size { width: 55px; }

.gallery { display: flex; width: 522px; height: 60px; margin: 5px 0 0 6px; border: 1px solid #c3c7cc; background: #fff; }
.style { width: 72px; flex-direction: column; align-items: flex-start; padding-left: 6px; }
.style b { width: 60px; overflow: hidden; text-align: left; color: #000; font: 19px/26px "Liberation Serif", serif; }
.style.strong b { font-weight: 700; }
.style span { font-family: "Open Sans", "Noto Sans", sans-serif; line-height: 18px; }
.spin { display: flex; flex: 1; flex-direction: column; border-left: 1px solid #c3c7cc; }
.spin button { flex: 1; background: linear-gradient(#fff, #eef0f3); }
.spin button + button { border-top: 1px solid #c3c7cc; }
.spin .arr { margin: 0; }

.qat {
  display: flex;
  align-items: center;
  height: 29px;
  border-top: 4px solid #c3c7cb;
  border-bottom: 1px solid #98a0ab;
  background: #d4d7dc;
}
.qat button { height: 22px; }
.q18 { width: 18px; }
.q27 { width: 27px; }
.q32 { width: 32px; }

.work { flex: 1; min-height: 0; display: grid; grid-template: minmax(0, 1fr) 18px / minmax(0, 1fr) 17px; }
.desk { padding: 4px 36px 0 4px; background: linear-gradient(#cdd1d6, #b8bbbf); overflow: hidden; }
.page { height: 100%; overflow: hidden; background: #fff; box-shadow: 2px 0 8px 2px #80848a; clip-path: inset(0 -14px 0 0); }
.thin { fill: none; stroke: #000; shape-rendering: crispEdges; }
.thick { fill: none; stroke: #000; stroke-width: 4; stroke-linejoin: round; shape-rendering: crispEdges; }
.label { font: 24px "Liberation Serif", serif; fill: #000; }
.n { font-size: 16px; }

.vscroll { grid-row: 1 / 3; grid-column: 2; display: flex; flex-direction: column; background: #dbe0e8; }
.split { height: 24px; border-bottom: 1px solid #a9afb8; }
.up { height: 16px; }
.vtrack { flex: 1; display: flex; flex-direction: column; justify-content: flex-end; padding-bottom: 219px; }
.vthumb { height: 17px; border: 1px solid #8b929c; border-radius: 2px; background: linear-gradient(90deg, #f7f8fa, #dfe3e8); }
.down { height: 16px; border-bottom: 1px solid #b4bac3; }
.nav { height: 17px; }
.nav:last-child { margin-bottom: 18px; }
.hscroll { display: flex; padding: 0 1px 1px 0; background: #dbe0e8; border-bottom: 1px solid #8c929b; }
.hleft { width: 94px; justify-content: flex-start; padding-left: 5px; }
.hthumb { flex: 1; border: 1px solid #868c96; border-radius: 2px; background: linear-gradient(#f1f4f8, #dde1e7); }
.hright { width: 17px; }

.status { display: flex; align-items: center; height: 21px; padding: 0 4px 1px 0; background: linear-gradient(#dcdfe3, #bcc0c4); }
.cell { display: flex; align-items: center; height: 19px; padding: 0 8px; border-right: 1px solid #8f949b; }
.lang { gap: 16px; }
.views { display: flex; align-items: center; margin-left: auto; padding-left: 4px; border-left: 1px solid #8f949b; }
.views button { width: 18px; height: 19px; }
.pct { margin: 0 8px 0 9px; }
.zoom { appearance: none; width: 100px; height: 16px; margin: 0; background: linear-gradient(#8b97a4, #8b97a4) center / 100% 1px no-repeat, linear-gradient(#8b97a4, #8b97a4) 50px center / 1px 8px no-repeat; }
.zoom::-webkit-slider-thumb { appearance: none; width: 9px; height: 12px; border: 1px solid #666c75; border-radius: 1px 1px 5px 5px; background: #f4f5f7; }

.taskbar {
  display: flex;
  align-items: center;
  height: 30px;
  border-top: 1px solid #2a52b0;
  background: linear-gradient(#8cc4f2, #5fa0e8 20%, #4a88dc 50%, #2f63c4 55%, #2a53b0);
  color: #fff;
  font: 11px/14px "DejaVu Sans Condensed", "DejaVu Sans", sans-serif;
}
.start {
  align-self: stretch;
  width: 97px;
  gap: 4px;
  padding-right: 14px;
  border-radius: 0 8px 8px 0;
  background: linear-gradient(#8fcf8a, #4faf4a 20%, #2f9a2c 50%, #12a012 55%, #17b517);
  box-shadow: inset -2px 0 2px #2a6f2c;
  font: italic bold 17px/20px "Open Sans", sans-serif;
  text-shadow: 1px 1px 1px #1e5a1e;
}
.quick { display: flex; gap: 7px; padding: 0 40px 0 11px; }
.tasks { display: flex; gap: 2px; }
.tasks button {
  width: 158px;
  height: 24px;
  margin-top: 2px;
  padding-left: 8px;
  gap: 3px;
  justify-content: flex-start;
  border: 1px solid #4a74c4;
  border-radius: 2px;
  background: linear-gradient(#7fb4ee, #5b98e8 45%, #3a75d2 50%, #2d5cba);
}
.tasks .on { padding-left: 9px; border-color: #12296a; background: linear-gradient(#45699f, #2a5598 45%, #143c80 50%, #103478); }
.rl { margin-left: auto; margin-right: 14px; padding: 0 1px; background: #2d5cb4; }
.tray { display: flex; align-items: center; align-self: stretch; gap: 2px; padding: 0 12px 0 11px; background: linear-gradient(#f1f8ff, #b8d8f8 45%, #86b4ea 52%, #78a2dd); color: #000; }
.ru { padding: 0 1px; background: #7f7f7f; color: #fff; }
.tray time { margin-left: 8px; }
```
